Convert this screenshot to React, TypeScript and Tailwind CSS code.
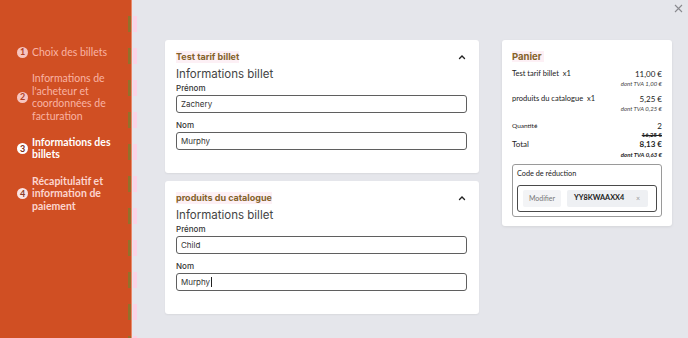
import React from 'react';

const steps = [
  { n: 1, lines: ['Choix des billets'], state: 'done' },
  { n: 2, lines: ["Informations de", "l'acheteur et", 'coordonnées de', 'facturation'], state: 'done' },
  { n: 3, lines: ['Informations des', 'billets'], state: 'active' },
  { n: 4, lines: ['Récapitulatif et', 'information de', 'paiement'], state: 'next' },
];

const Field = ({ label, value, caret }: { label: string; value: string; caret?: boolean }) => (
  <div>
    <div className="text-[8px] leading-[10px] font-medium text-[#333]">{label}</div>
    <div className="mt-[2px] h-[18px] w-[291px] rounded-[3px] border-[1.5px] border-[#5f5f5f] bg-white px-[4px] flex items-center text-[8px] text-[#333]">
      {value}
      {caret && <span className="ml-[1px] h-[10px] w-px bg-[#222]" />}
    </div>
  </div>
);

const TicketCard = ({ title, first, last, caret }: { title: string; first: string; last: string; caret?: boolean }) => (
  <div className="h-[133px] rounded-[3px] bg-white px-[11px] pt-[11px] shadow-[0_1px_2px_rgba(0,0,0,0.06)] font-['Inter',sans-serif]">
    <div className="flex h-[12px] items-center justify-between w-[291px] text-[9px] leading-[12px]">
      <span className="bg-[#fdf0f5] font-bold text-[#84622a]">{title}</span>
      <svg width="8" height="6" viewBox="0 0 8 6" className="mr-[1px]">
        <path d="M1.5 4.5 L4 2 L6.5 4.5" fill="none" stroke="#222" strokeWidth="1.4" strokeLinecap="round" />
      </svg>
    </div>
    <div className="mt-[4px] text-[11.5px] leading-[14px] text-[#444]">Informations billet</div>
    <div className="mt-[2px]">
      <Field label="Prénom" value={first} />
    </div>
    <div className="mt-[7px]">
      <Field label="Nom" value={last} caret={caret} />
    </div>
  </div>
);

export default function App() {
  return (
    <div className="flex h-[338px] w-[688px] overflow-hidden bg-[#e5e6eb] font-['Lato',sans-serif]">
      <aside className="relative h-full w-[132px] shrink-0 bg-[#d04f23] border-r border-[#e98a6c] pl-[17px] pt-[46px]">
        <div className="absolute right-[0px] top-0 h-full w-[3px] bg-[repeating-linear-gradient(to_bottom,transparent_0,transparent_16px,#93702a_16px,#93702a_32px)]" />
        <div className="absolute right-[-6px] top-0 h-full w-[4px] bg-[repeating-linear-gradient(to_bottom,transparent_0,transparent_16px,#fcd3e6_16px,#fcd3e6_32px)]" />
        <div className="flex flex-col gap-[14px]">
          {steps.map((s) => {
            const active = s.state === 'active';
            const next = s.state === 'next';
            return (
              <div key={s.n} className="flex items-center gap-[4px]">
                <span
                  className={
                    active
                      ? 'flex h-[11px] w-[11px] shrink-0 items-center justify-center rounded-full bg-white text-[9px] font-bold text-[#7a2a14]'
                      : next
                      ? 'flex h-[11px] w-[11px] shrink-0 items-center justify-center rounded-full bg-[#fbe3e4] text-[9px] font-bold text-[#8a3a25]'
                      : 'flex h-[11px] w-[11px] shrink-0 items-center justify-center rounded-full bg-[#f7c5c0] text-[9px] font-bold text-[#b33f1f]'
                  }
                >
                  {s.n}
                </span>
                <div
                  className={
                    active
                      ? 'text-[10.5px] leading-[12.4px] font-bold text-white'
                      : next
                      ? 'text-[10.5px] leading-[12.4px] font-bold text-[#fcd5cf]'
                      : 'text-[10.5px] leading-[12.4px] text-[#f9b3a4]'
                  }
                >
                  {s.lines.map((l) => (
                    <div key={l}>{l}</div>
                  ))}
                </div>
              </div>
            );
          })}
        </div>
      </aside>

      <main className="relative flex-1 pl-[33px] pt-[40px]">
        <svg width="9" height="9" viewBox="0 0 9 9" className="absolute right-[5px] top-[4px]">
          <path d="M1 1 L8 8 M8 1 L1 8" stroke="#8a8a8f" strokeWidth="1.1" />
        </svg>
        <div className="flex items-start gap-[23px]">
          <div className="flex w-[314px] flex-col gap-[8px]">
            <TicketCard title="Test tarif billet" first="Zachery" last="Murphy" />
            <TicketCard title="produits du catalogue" first="Child" last="Murphy" caret />
          </div>

          <div className="w-[170px] rounded-[3px] bg-white px-[10px] pt-[11px] pb-[9px] text-[#222] shadow-[0_1px_3px_rgba(0,0,0,0.08)]">
            <div className="font-['Inter',sans-serif] text-[9.5px] leading-[12px]">
              <span className="bg-[#fdf0f5] pr-[2px] font-bold text-[#84622a]">Panier</span>
            </div>
            <div className="mt-[6px] flex justify-between text-[7.5px] leading-[10px]">
              <span>Test tarif billet&nbsp; x1</span>
              <span className="text-[8px]">11,00 €</span>
            </div>
            <div className="text-right text-[6px] leading-[9px] italic text-[#444]">dont TVA 1,00 €</div>
            <div className="mt-[6px] flex justify-between text-[7.5px] leading-[10px]">
              <span>produits du catalogue&nbsp; x1</span>
              <span className="text-[8px]">5,25 €</span>
            </div>
            <div className="text-right text-[6px] leading-[9px] italic text-[#444]">dont TVA 0,25 €</div>
            <div className="mt-[8px] flex items-center justify-between leading-[10px]">
              <span className="text-[6.5px]">Quantité</span>
              <span className="text-[8px]">2</span>
            </div>
            <div className="text-right text-[6px] leading-[8px] font-bold line-through">16,25 €</div>
            <div className="flex justify-between text-[8px] leading-[11px]">
              <span>Total</span>
              <span className="font-bold">8,13 €</span>
            </div>
            <div className="text-right text-[6px] leading-[9px] font-bold italic">dont TVA 0,63 €</div>
            <div className="mt-[5px] rounded-[3px] border border-[#9a9a9a] px-[4px] pt-[3px] pb-[4px]">
              <div className="text-[7.3px] leading-[12px]">Code de réduction</div>
              <div className="mt-[5px] flex h-[27px] items-center gap-[6px] rounded-[3px] border-[1.5px] border-[#4a4a4a] px-[5px]">
                <span className="flex h-[17px] w-[38px] items-center justify-center rounded-[2px] bg-[#f3f4f6] text-[7px] text-[#777]">Modifier</span>
                <span className="flex h-[17px] w-[81px] items-center justify-between rounded-[2px] bg-[#eef0f3] pl-[7px] pr-[8px] text-[7.3px] font-bold text-[#222]">
                  YY8KWAAXX4
                  <span className="text-[7px] font-normal text-[#999]">×</span>
                </span>
              </div>
            </div>
          </div>
        </div>
      </main>
    </div>
  );
}
